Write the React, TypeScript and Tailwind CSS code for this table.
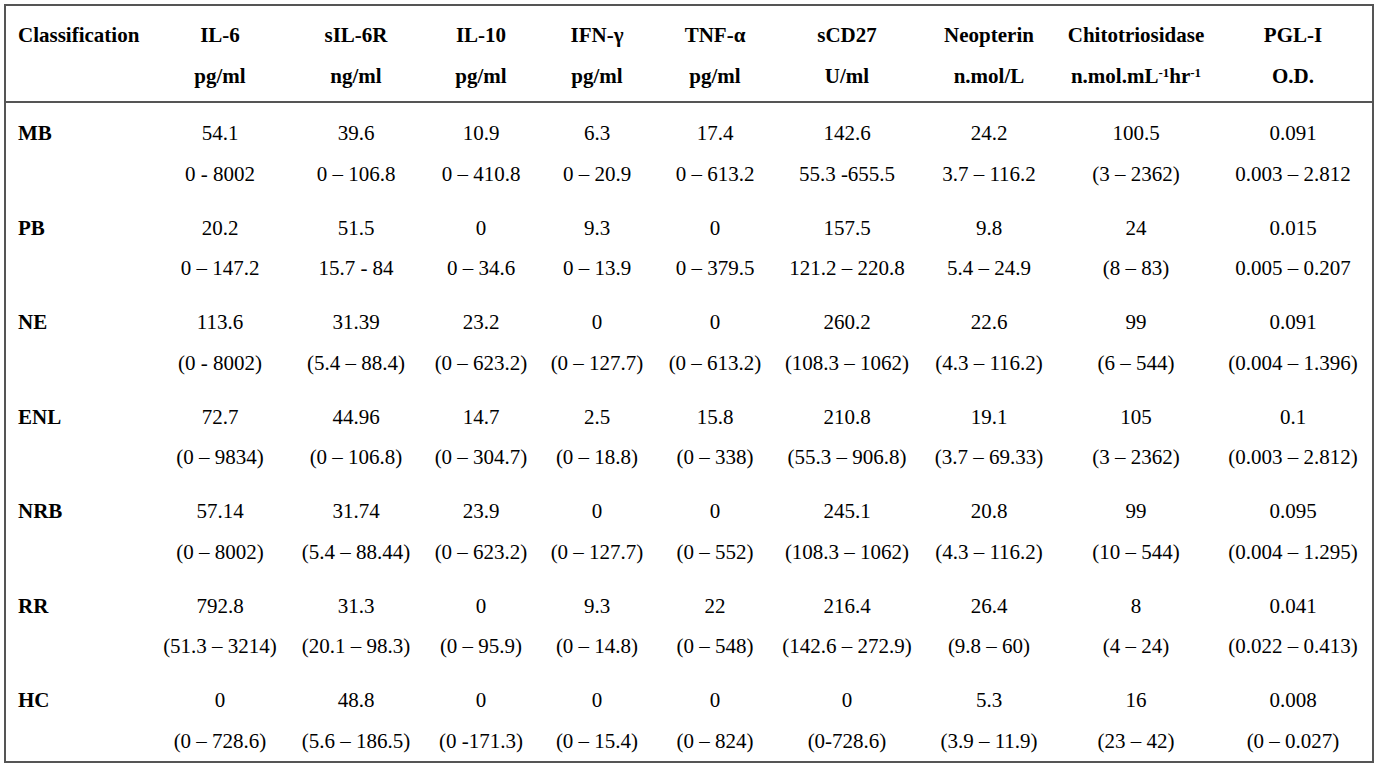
import React from "react";

type Row = { label: string; cells: [string, string][] };

const rows: Row[] = [
  {
    label: "MB",
    cells: [
      ["54.1", "0 - 8002"],
      ["39.6", "0 – 106.8"],
      ["10.9", "0 – 410.8"],
      ["6.3", "0 – 20.9"],
      ["17.4", "0 – 613.2"],
      ["142.6", "55.3 -655.5"],
      ["24.2", "3.7 – 116.2"],
      ["100.5", "(3 – 2362)"],
      ["0.091", "0.003 – 2.812"],
    ],
  },
  {
    label: "PB",
    cells: [
      ["20.2", "0 – 147.2"],
      ["51.5", "15.7 - 84"],
      ["0", "0 – 34.6"],
      ["9.3", "0 – 13.9"],
      ["0", "0 – 379.5"],
      ["157.5", "121.2 – 220.8"],
      ["9.8", "5.4 – 24.9"],
      ["24", "(8 – 83)"],
      ["0.015", "0.005 – 0.207"],
    ],
  },
  {
    label: "NE",
    cells: [
      ["113.6", "(0 - 8002)"],
      ["31.39", "(5.4 – 88.4)"],
      ["23.2", "(0 – 623.2)"],
      ["0", "(0 – 127.7)"],
      ["0", "(0 – 613.2)"],
      ["260.2", "(108.3 – 1062)"],
      ["22.6", "(4.3 – 116.2)"],
      ["99", "(6 – 544)"],
      ["0.091", "(0.004 – 1.396)"],
    ],
  },
  {
    label: "ENL",
    cells: [
      ["72.7", "(0 – 9834)"],
      ["44.96", "(0 – 106.8)"],
      ["14.7", "(0 – 304.7)"],
      ["2.5", "(0 – 18.8)"],
      ["15.8", "(0 – 338)"],
      ["210.8", "(55.3 – 906.8)"],
      ["19.1", "(3.7 – 69.33)"],
      ["105", "(3 – 2362)"],
      ["0.1", "(0.003 – 2.812)"],
    ],
  },
  {
    label: "NRB",
    cells: [
      ["57.14", "(0 – 8002)"],
      ["31.74", "(5.4 – 88.44)"],
      ["23.9", "(0 – 623.2)"],
      ["0", "(0 – 127.7)"],
      ["0", "(0 – 552)"],
      ["245.1", "(108.3 – 1062)"],
      ["20.8", "(4.3 – 116.2)"],
      ["99", "(10 – 544)"],
      ["0.095", "(0.004 – 1.295)"],
    ],
  },
  {
    label: "RR",
    cells: [
      ["792.8", "(51.3 – 3214)"],
      ["31.3", "(20.1 – 98.3)"],
      ["0", "(0 – 95.9)"],
      ["9.3", "(0 – 14.8)"],
      ["22", "(0 – 548)"],
      ["216.4", "(142.6 – 272.9)"],
      ["26.4", "(9.8 – 60)"],
      ["8", "(4 – 24)"],
      ["0.041", "(0.022 – 0.413)"],
    ],
  },
  {
    label: "HC",
    cells: [
      ["0", "(0 – 728.6)"],
      ["48.8", "(5.6 – 186.5)"],
      ["0", "(0 -171.3)"],
      ["0", "(0 – 15.4)"],
      ["0", "(0 – 824)"],
      ["0", "(0-728.6)"],
      ["5.3", "(3.9 – 11.9)"],
      ["16", "(23 – 42)"],
      ["0.008", "(0 – 0.027)"],
    ],
  },
];

const headers: [string, React.ReactNode][] = [
  ["IL-6", "pg/ml"],
  ["sIL-6R", "ng/ml"],
  ["IL-10", "pg/ml"],
  ["IFN-γ", "pg/ml"],
  ["TNF-α", "pg/ml"],
  ["sCD27", "U/ml"],
  ["Neopterin", "n.mol/L"],
  [
    "Chitotriosidase",
    <>
      n.mol.mL<sup className="text-[13px]">-1</sup>hr<sup className="text-[13px]">-1</sup>
    </>,
  ],
  ["PGL-I", "O.D."],
];

const widths = ["w-[147px]", "w-[136px]", "w-[136px]", "w-[114px]", "w-[118px]", "w-[118px]", "w-[146px]", "w-[138px]", "w-[156px]", "w-[159px]"];

export default function App() {
  return (
    <div className="min-h-screen bg-white pl-[4px] pt-[4px] font-['Liberation_Serif',serif] text-[21px] text-black">
      <table className="table-fixed border-collapse border-2 border-[#555]">
        <colgroup>
          {widths.map((w, i) => (
            <col key={i} className={w} />
          ))}
        </colgroup>
        <thead>
          <tr className="border-b-2 border-[#555] leading-[41px]">
            <th className="pl-[12px] pt-[9px] pb-[4px] text-left align-top font-bold">Classification</th>
            {headers.map(([name, unit], i) => (
              <th key={i} className="pt-[9px] pb-[4px] text-center align-top font-bold">
                <div>{name}</div>
                <div>{unit}</div>
              </th>
            ))}
          </tr>
        </thead>
        <tbody className="leading-[40.5px]">
          {rows.map((row, r) => (
            <tr key={row.label}>
              <td className={`pl-[12px] pt-[10px] align-top font-bold ${r === rows.length - 1 ? "pb-0" : "pb-[3.5px]"}`}>
                {row.label}
              </td>
              {row.cells.map(([v, range], i) => (
                <td key={i} className={`pt-[10px] text-center align-top whitespace-nowrap ${r === rows.length - 1 ? "pb-0" : "pb-[3.5px]"}`}>
                  <div>{v}</div>
                  <div>{range}</div>
                </td>
              ))}
            </tr>
          ))}
        </tbody>
      </table>
    </div>
  );
}
